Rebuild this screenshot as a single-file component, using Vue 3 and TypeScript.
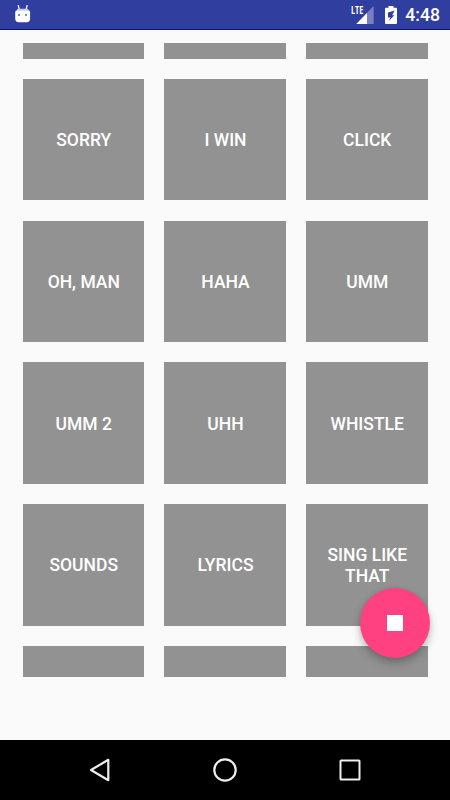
<script setup lang="ts">
const sounds: string[] = [
  '', '', '',
  'Sorry', 'I win', 'Click',
  'Oh, man', 'Haha', 'Umm',
  'Umm 2', 'Uhh', 'Whistle',
  'Sounds', 'Lyrics', 'Sing like that',
  '', '', '',
]
</script>

<template>
  <div class="screen">
    <header class="status">
      <svg class="robot" width="16" height="18" viewBox="0 0 16 18">
        <path d="M3.200 0L4.300 4.500M12.200 0L11.100 4.500" stroke="#fff" stroke-width="1.200" />
        <path d="M2.600 3.700h10.300l1.500 2.600H1z" fill="#c9cdea" />
        <path d="M.8 5.800h13.900l.4 1.200v6.500q0 3.700-3.500 3.700H3.700q-3.500 0-3.500-3.700V7z" fill="#fff" />
        <path d="M3 9h2v2H3zM10 9h2v2h-2z" fill="#8189c9" />
      </svg>
      <div class="indicators">
        <div class="signal">
          <svg width="18" height="18" viewBox="0 0 18 18">
            <path d="M17.600 0V18H.3z" fill="#7880c0" />
            <path d="M11 7V18H.3z" fill="#fff" />
          </svg>
          <span class="lte">LTE</span>
        </div>
        <svg class="battery" width="12" height="18" viewBox="0 0 12 18">
          <path d="M3.500 0h5v1.700H11q1 0 1 1V17q0 1-1 1H1q-1 0-1-1V2.700q0-1 1-1h2.500z" fill="#fff" />
          <path d="M9.600 4.500L3 6.500v5h2.500L3.500 15.300 9.400 9.300H7.200z" fill="#303f9f" />
        </svg>
        <span class="clock">4:48</span>
      </div>
    </header>

    <main class="content">
      <div class="board">
        <div class="grid">
          <button v-for="(sound, i) in sounds" :key="i" class="tile" type="button">{{ sound }}</button>
        </div>
      </div>
      <button class="fab" type="button" aria-label="Stop"><span class="stop"></span></button>
    </main>

    <nav class="nav">
      <svg width="24" height="26" viewBox="0 0 24 26">
        <path d="M20.300 2.800V23.200L3 13z" fill="none" stroke="#eee" stroke-width="2.200" stroke-linejoin="round" />
      </svg>
      <svg width="26" height="26" viewBox="0 0 26 26">
        <circle cx="13" cy="13" r="10.700" fill="none" stroke="#eee" stroke-width="2.200" />
      </svg>
      <svg width="24" height="26" viewBox="0 0 24 26">
        <rect x="2.500" y="3.500" width="19" height="19" rx=".6" fill="none" stroke="#eee" stroke-width="2" />
      </svg>
    </nav>
  </div>
</template>

<style>
body {
  margin: 0;
}
</style>

<style scoped>
.screen {
  width: 450px;
  height: 800px;
  display: flex;
  flex-direction: column;
  overflow: hidden;
  background: #fafafa;
  font-family: Roboto, "Liberation Sans", sans-serif;
}
.status {
  box-sizing: border-box;
  height: 30px;
  flex: none;
  display: flex;
  justify-content: space-between;
  align-items: flex-start;
  padding: 5px 10px 0 15px;
  background: #303f9f;
  border-bottom: 1px solid #0a1485;
  color: #fff;
}
.robot {
  display: block;
}
.indicators {
  display: flex;
  align-items: flex-start;
}
.signal {
  position: relative;
  padding-top: 1px;
  margin-right: 11px;
}
.signal svg,
.battery {
  display: block;
}
.battery {
  margin: 1px 8px 0 0;
}
.lte {
  position: absolute;
  left: -5px;
  top: -1px;
  font: 700 11px/11px "Open Sans", Roboto, sans-serif;
  transform: scaleX(0.66);
  transform-origin: left;
}
.clock {
  font-size: 17.6px;
  line-height: 21px;
  font-weight: 500;
}
.content {
  position: relative;
  flex: 1;
  padding: 12.5px 22.5px 0;
}
.board {
  height: 634.8px;
  overflow: hidden;
}
.grid {
  display: grid;
  grid-template-columns: repeat(3, 121.5px);
  grid-auto-rows: 121.5px;
  gap: 20.25px;
  margin-top: -105.4px;
}
.tile {
  border: 0;
  margin: 0;
  padding: 2.2px 14.5px 0 15.5px;
  background: #929292;
  color: #fff;
  font: 500 17.5px/21px Roboto, "Liberation Sans", sans-serif;
  text-transform: uppercase;
}
.fab {
  position: absolute;
  right: 20px;
  bottom: 82.4px;
  width: 70px;
  height: 70px;
  padding: 0;
  border: 0;
  border-radius: 50%;
  display: flex;
  align-items: center;
  justify-content: center;
  background: #ff4081;
  box-shadow: 0 5px 9px rgba(0, 0, 0, 0.25), 0 0 4px rgba(0, 0, 0, 0.08);
}
.stop {
  width: 16px;
  height: 16px;
  background: #fff;
}
.nav {
  height: 60px;
  flex: none;
  display: flex;
  align-items: center;
  justify-content: space-between;
  padding: 0 88px;
  background: #000;
}
</style>
